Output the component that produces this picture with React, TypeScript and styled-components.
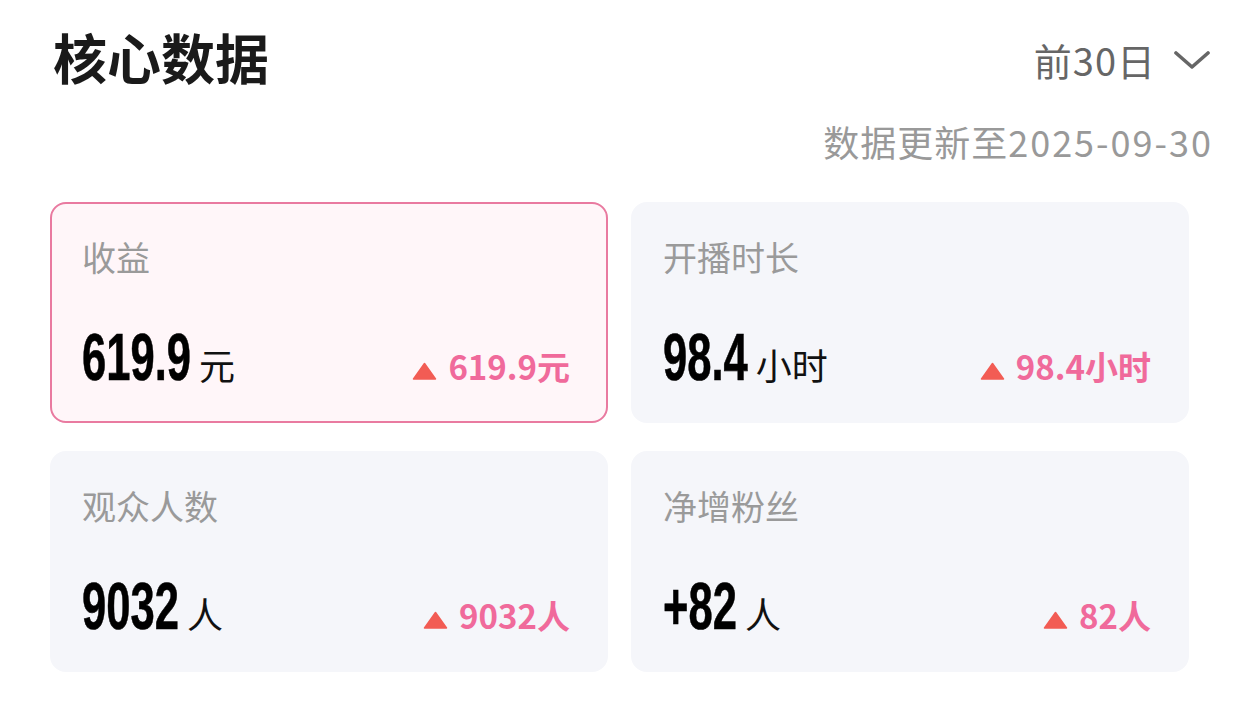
import React from 'react';
import styled, { createGlobalStyle } from 'styled-components';

const GlobalStyle = createGlobalStyle`
  html, body {
    margin: 0;
    padding: 0;
    background: #ffffff;
  }
  body {
    font-family: 'Noto Sans CJK SC', 'Noto Sans', sans-serif;
  }
`;

interface Metric {
  id: string;
  label: string;
  value: string;
  unit: string;
  change: string;
  active?: boolean;
}

const metrics: Metric[] = [
  { id: 'income', label: '收益', value: '619.9', unit: '元', change: '619.9元', active: true },
  { id: 'duration', label: '开播时长', value: '98.4', unit: '小时', change: '98.4小时' },
  { id: 'viewers', label: '观众人数', value: '9032', unit: '人', change: '9032人' },
  { id: 'fans', label: '净增粉丝', value: '+82', unit: '人', change: '82人' },
];

const NUM_SIZE = 67;
const NUM_SCALE = 0.65;
const ADVANCE: Record<string, number> = { '.': 0.278, '+': 0.584 };

const Page = styled.div`
  width: 1260px;
  height: 713px;
  padding: 0 50px 0 50px;
  box-sizing: border-box;
`;

const TitleRow = styled.header`
  height: 118px;
  display: flex;
  align-items: center;
  justify-content: space-between;
`;

const Title = styled.h1`
  margin: 0 0 4px 3px;
  font-size: 54px;
  font-weight: 700;
  color: #1a1a1a;
  line-height: 1;
`;

const RangePicker = styled.div`
  display: flex;
  align-items: center;
  gap: 18px;
  color: #666666;
  font-size: 38px;
  letter-spacing: 1px;
  line-height: 1;
  margin-top: 2px;
`;

const UpdateRow = styled.div`
  height: 45px;
  display: flex;
  align-items: center;
  justify-content: flex-end;
  color: #999999;
  font-size: 36px;
  letter-spacing: 1px;
  line-height: 1;
  margin-right: -1px;
  span {
    letter-spacing: 2px;
    margin-right: -2px;
  }
`;

const Grid = styled.section`
  width: 1139px;
  margin-top: 39px;
  display: grid;
  grid-template-columns: 1fr 1fr;
  grid-auto-rows: 221px;
  column-gap: 23px;
  row-gap: 28px;
`;

const Card = styled.div<{ $active?: boolean }>`
  box-sizing: border-box;
  border-radius: 16px;
  border: 2px solid ${(p) => (p.$active ? '#e97aa0' : '#f5f6fa')};
  background: ${(p) => (p.$active ? '#fff6f9' : '#f5f6fa')};
  padding: 36px 36px 0 30px;
  display: flex;
  flex-direction: column;
`;

const Label = styled.div`
  font-size: 34px;
  color: #9a9a9a;
  line-height: 1;
`;

const ValueRow = styled.div`
  margin-top: 49px;
  display: flex;
  align-items: baseline;
  justify-content: space-between;
`;

const ValueBox = styled.div`
  display: flex;
  align-items: baseline;
`;

const BigNum = styled.span`
  display: inline-block;
  font-family: 'Liberation Sans', Arial, sans-serif;
  font-weight: 700;
  font-size: ${NUM_SIZE}px;
  line-height: 1;
  color: #000000;
  transform: scaleX(${NUM_SCALE});
  transform-origin: left bottom;
  -webkit-text-stroke: 0.6px #000000;
`;

const Unit = styled.span`
  margin-left: 8px;
  font-size: 36px;
  line-height: 1;
  color: #111111;
`;

const Change = styled.div`
  display: flex;
  align-items: baseline;
  gap: 11px;
  color: #f06a9b;
  font-size: 33px;
  font-weight: 700;
  line-height: 1;
`;

const Arrow = styled.svg`
  width: 25px;
  height: 18px;
`;

const numWidth = (text: string) =>
  text.split('').reduce((sum, ch) => sum + (ADVANCE[ch] ?? 0.556), 0) * NUM_SIZE;

const ChevronDown = () => (
  <svg width="36" height="20" viewBox="0 0 36 20" fill="none">
    <path d="M2 3 L18 17 L34 3" stroke="#666666" strokeWidth="3.6" strokeLinecap="round" strokeLinejoin="round" />
  </svg>
);

const MetricCard = ({ item }: { item: Metric }) => (
  <Card $active={item.active}>
    <Label>{item.label}</Label>
    <ValueRow>
      <ValueBox>
        <BigNum style={{ marginRight: -numWidth(item.value) * (1 - NUM_SCALE) }}>{item.value}</BigNum>
        <Unit>{item.unit}</Unit>
      </ValueBox>
      <Change>
        <Arrow viewBox="0 0 25 18">
          <path d="M12.5 1.5 L23.5 17 L1.5 17 Z" fill="#f25c54" stroke="#f25c54" strokeWidth="1.5" strokeLinejoin="round" />
        </Arrow>
        <span>{item.change}</span>
      </Change>
    </ValueRow>
  </Card>
);

const App = () => {
  return (
    <>
      <GlobalStyle />
      <Page>
        <TitleRow>
          <Title>核心数据</Title>
          <RangePicker>
            <span>前30日</span>
            <ChevronDown />
          </RangePicker>
        </TitleRow>
        <UpdateRow>
          数据更新至<span>2025-09-30</span>
        </UpdateRow>
        <Grid>
          {metrics.map((it) => (
            <MetricCard key={it.id} item={it} />
          ))}
        </Grid>
      </Page>
    </>
  );
};

export default App;
